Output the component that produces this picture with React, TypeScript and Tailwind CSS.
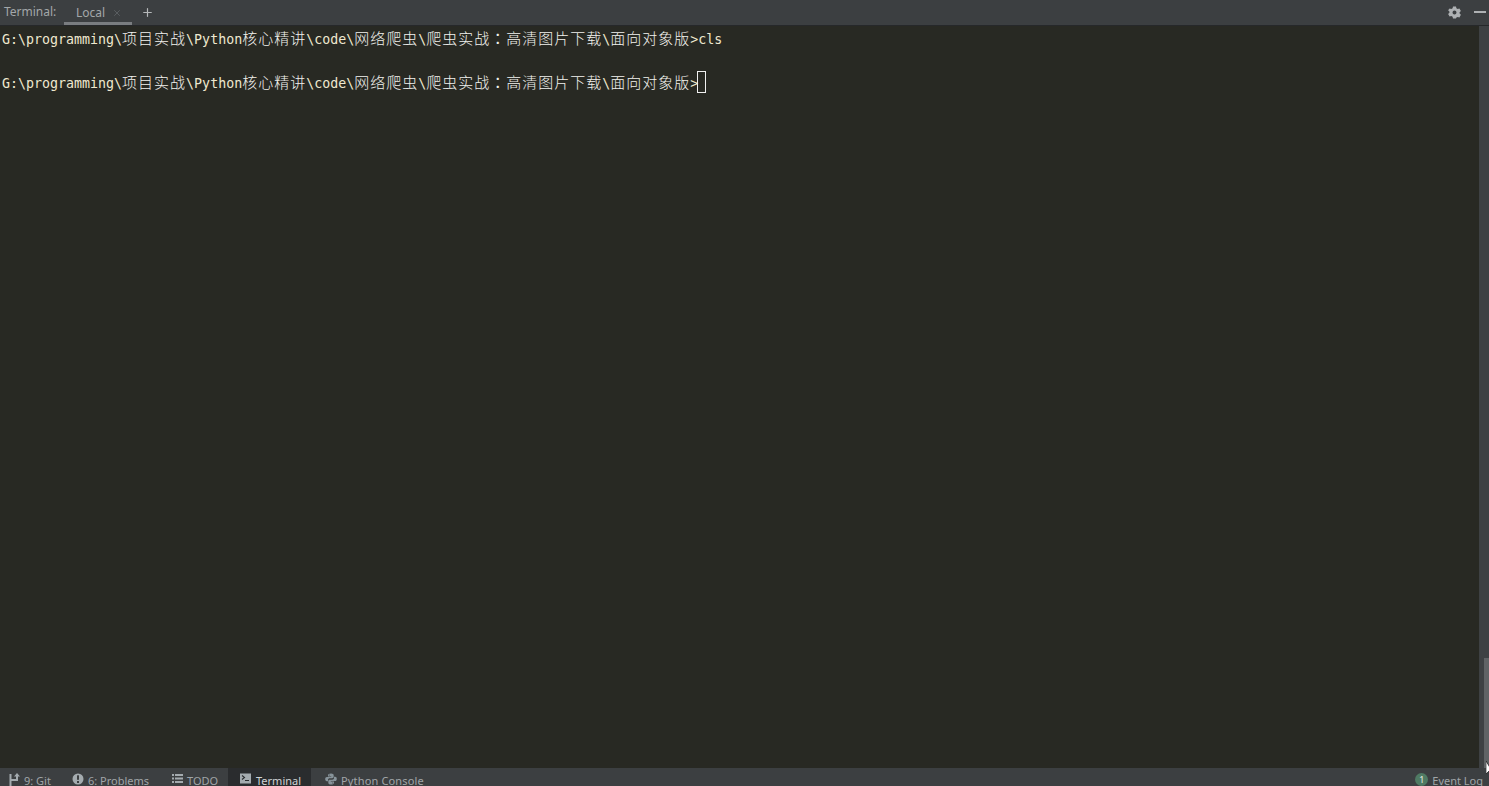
import React from 'react';
import { Plus, X } from 'lucide-react';

const MONO = "font-['DejaVu_Sans_Mono','Liberation_Mono',monospace]";

// mono runs are 8px per char, CJK runs 16px per char
const PROMPT: [string, string][] = [
  ['G:\\programming\\', 'mono'],
  ['项目实战', 'cjk'],
  ['\\Python', 'mono'],
  ['核心精讲', 'cjk'],
  ['\\code\\', 'mono'],
  ['网络爬虫', 'cjk'],
  ['\\', 'mono'],
  ['爬虫实战', 'cjk'],
  ['：', 'colon'],
  ['高清图片下载', 'cjk'],
  ['\\', 'mono'],
  ['面向对象版', 'cjk'],
  ['>', 'mono'],
];

function Prompt() {
  return (
    <>
      {PROMPT.map(([text, kind], i) => {
        if (kind === 'cjk') {
          return (
            <span key={i} className="font-['Noto_Sans_CJK_SC',sans-serif] text-[15px] font-light tracking-[1px] text-[#f2f2ee]">
              {text}
            </span>
          );
        }
        if (kind === 'colon') {
          return (
            <span key={i} className="font-['Noto_Sans_CJK_TC',sans-serif] text-[15px] tracking-[1px] text-[#f2f2ee]">
              {text}
            </span>
          );
        }
        return <span key={i}>{text}</span>;
      })}
    </>
  );
}

function GitIcon() {
  return (
    <svg width="11" height="13" viewBox="0 0 11 13" fill="#a4abaf">
      <rect x="0.500" y="1" width="2" height="12" />
      <rect x="2" y="6" width="7" height="2" />
      <rect x="7" y="3" width="2" height="4" />
      <path d="M8 0 L11 3.500 L5 3.500 Z" />
    </svg>
  );
}

function ProblemsIcon() {
  return (
    <svg width="12" height="12" viewBox="0 0 12 12">
      <circle cx="6" cy="6" r="5.500" fill="#a4abaf" />
      <rect x="5" y="2.300" width="2" height="4.500" fill="#3c3f41" />
      <rect x="5" y="8" width="2" height="2" fill="#3c3f41" />
    </svg>
  );
}

function TodoIcon() {
  return (
    <svg width="11" height="11" viewBox="0 0 11 11" fill="#a4abaf">
      <rect x="0" y="1" width="2" height="2" />
      <rect x="3" y="1" width="8" height="2" />
      <rect x="0" y="4.500" width="2" height="2" />
      <rect x="3" y="4.500" width="8" height="2" />
      <rect x="0" y="8" width="2" height="2" />
      <rect x="3" y="8" width="8" height="2" />
    </svg>
  );
}

function TerminalIcon() {
  return (
    <svg width="12" height="11" viewBox="0 0 12 11">
      <rect x="0" y="0.500" width="11" height="10" fill="#a4abaf" />
      <path d="M2 2.500 L4.500 4.500 L2 6.500" fill="none" stroke="#2a2c2e" strokeWidth="1.100" />
      <rect x="5" y="7" width="4" height="1" fill="#2a2c2e" />
    </svg>
  );
}

function PythonIcon() {
  return (
    <svg width="12" height="12" viewBox="0 0 12 12" fill="#87939a">
      <path d="M6 .5c-2 0-3 .7-3 1.800V3.500h3.200V4H1.900C.8 4 .2 4.900.2 6.100c0 1.300.6 2.200 1.600 2.200H3V6.900c0-1 .8-1.700 1.800-1.700h2.400C8 5.200 8.700 4.600 8.700 3.800V2.300C8.700 1.200 7.800.5 6 .5zM4.300 1.400a.5.5 0 1 1 0 1 .5.5 0 0 1 0-1z" />
      <path d="M6 11.500c2 0 3-.7 3-1.800V8.500H5.800V8h4.300c1.100 0 1.700-.9 1.700-2.100 0-1.300-.6-2.200-1.600-2.200H9v1.400c0 1-.8 1.700-1.800 1.700H4.800C4 6.800 3.300 7.400 3.300 8.200v1.500c0 1.100.9 1.800 2.700 1.800zm1.700-.9a.5.5 0 1 1 0-1 .5.5 0 0 1 0 1z" />
    </svg>
  );
}

function GearIcon() {
  return (
    <svg width="13" height="13" viewBox="0 0 13 13">
      <path
        fillRule="evenodd"
        fill="#aeb1b3"
        d="M5 .5h3l.4 1.700 1.300.7 1.700-.5 1.500 2.600-1.300 1.200v1.400l1.300 1.200-1.500 2.600-1.700-.5-1.300.7L8 12.500H5l-.4-1.700-1.300-.7-1.700.5L.1 8l1.300-1.200V5.400L.1 4.200 1.600 2.400l1.700.5 1.300-.7zM6.500 4.500a2 2 0 1 0 0 4 2 2 0 0 0 0-4z"
      />
    </svg>
  );
}

function ToolTab({ icon, label, className }: { icon: React.ReactNode; label: string; className: string }) {
  return (
    <div className={`flex h-full items-start pt-[5px] ${className}`}>
      {icon}
      <span className="whitespace-nowrap pl-[4px] pt-[3px] leading-[10px]">{label}</span>
    </div>
  );
}

export default function App() {
  return (
    <div className="flex h-[786px] w-[1489px] flex-col overflow-hidden bg-[#282923] font-['Noto_Sans',sans-serif]">
      {/* Tool window header */}
      <div className="flex h-[26px] shrink-0 items-stretch border-b border-[#26282a] bg-[#3c3f41] text-[12px] text-[#a3a7a9]">
        <span className="ml-[4px] flex w-[60px] items-center pb-[1px]">Terminal:</span>
        <div className="relative flex w-[68px] items-center border-b-[3px] border-[#7a7d80] pl-[12px] pt-[3px]">
          <span>Local</span>
          <X size={10} strokeWidth={1.5} className="absolute left-[48px] top-[8px] text-[#6c7073]" />
        </div>
        <div className="ml-[9px] flex items-center pb-[1px]">
          <Plus size={13} strokeWidth={2.2} className="text-[#b5b8ba]" />
        </div>
        <div className="ml-auto flex items-center gap-[13px] pb-[1px] pr-[3px]">
          <GearIcon />
          <div className="h-[2px] w-[12px] bg-[#aeb1b3]" />
        </div>
      </div>

      {/* Terminal body */}
      <div className="flex min-h-0 flex-1">
        <div className={`flex-1 pl-[2px] pt-[1px] text-[13.3px] leading-[22px] text-[#efe8cf] ${MONO}`}>
          <div className="h-[22px] whitespace-pre">
            <Prompt />cls
          </div>
          <div className="h-[23px]" />
          <div className="flex h-[22px] items-center whitespace-pre">
            <span>
              <Prompt />
            </span>
            <span className="-ml-[1px] -mt-[3px] h-[22px] w-[9px] border border-[#f0f0f0]" />
          </div>
        </div>
        <div className="flex w-[10px] shrink-0 flex-col justify-end bg-[#3e4143]">
          <div className="ml-[5px] h-[110px] w-[5px] bg-[#606365]" />
        </div>
      </div>

      {/* Bottom tool stripe */}
      <div className="relative flex h-[18px] shrink-0 items-start bg-[#3c3f41] text-[11px] leading-[12px] text-[#a0a5a8]">
        <ToolTab icon={<GitIcon />} label="9: Git" className="w-[61px] pl-[9px]" />
        <ToolTab icon={<ProblemsIcon />} label="6: Problems" className="w-[98px] pl-[11px]" />
        <ToolTab icon={<TodoIcon />} label="TODO" className="w-[69px] pl-[13px]" />
        <ToolTab icon={<TerminalIcon />} label="Terminal" className="w-[83px] bg-[#2a2c2e] pl-[12px] text-[#d0d3d5]" />
        <ToolTab icon={<PythonIcon />} label="Python Console" className="pl-[14px] tracking-[0.15px]" />
        <div className="ml-auto flex h-full items-start gap-[4px] pr-[6px] pt-[5px]">
          <span className="flex h-[13px] w-[13px] items-center justify-center rounded-full bg-[#4f7a63] text-[9px] leading-none text-[#e6ece8]">1</span>
          <span className="whitespace-nowrap pt-[3px] leading-[10px]">Event Log</span>
        </div>
        {/* mouse pointer */}
        <svg width="6" height="15" viewBox="0 0 6 15" className="absolute right-[-3px] top-[-7px]">
          <path d="M0 0 L0 13 L3 10 L6 10 Z" fill="#fff" stroke="#000" strokeWidth="0.6" />
        </svg>
      </div>
    </div>
  );
}
